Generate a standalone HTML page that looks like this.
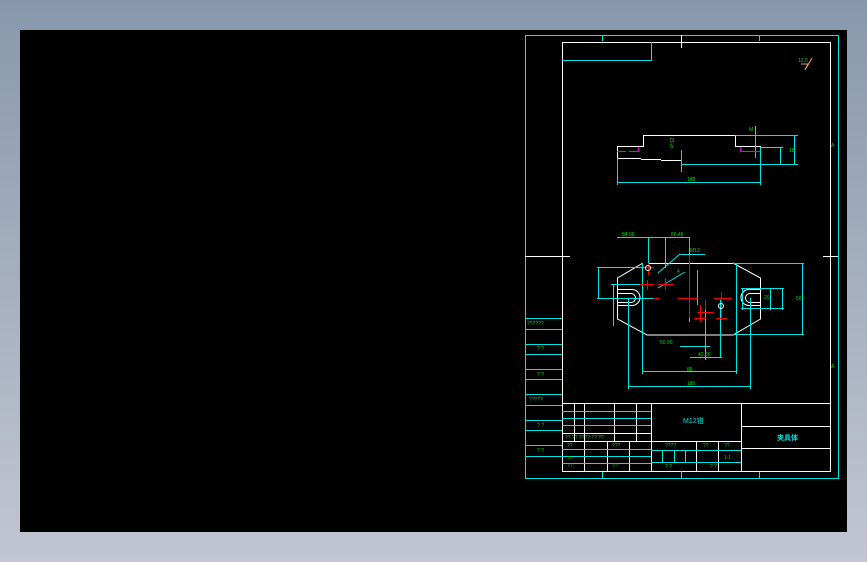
<!DOCTYPE html>
<html><head><meta charset="utf-8"><style>
html,body{margin:0;padding:0}
body{width:867px;height:562px;background:linear-gradient(#8898ac,#c2c6d2);position:relative;overflow:hidden;font-family:"Liberation Sans","Noto Sans CJK SC",sans-serif}
#c{position:absolute;left:20px;top:30px;width:827px;height:502px;background:#000}
svg{position:absolute;left:0;top:0}
text{font-family:"Liberation Sans","Noto Sans CJK SC",sans-serif}
</style></head><body>
<div id="c"></div>
<svg width="867" height="562" viewBox="0 0 867 562" shape-rendering="crispEdges" fill="none" stroke-width="1">
<!-- frames -->
<rect x="525.5" y="35.5" width="313" height="443" stroke="#00e5e5"/>
<path d="M562.5 471V42.5H830.5V471.5H562" stroke="#fff"/>
<path d="M562 60.5H651.5V42" stroke="#00e5e5"/>
<path d="M681.5 35V48" stroke="#fff"/>
<path d="M602.5 36V41M759.5 36V41M602.5 472V478M759.5 472V478M681.5 471V478" stroke="#00e5e5"/>
<path d="M525 256.5H570M823 256.5H838" stroke="#fff"/>
<!-- left column -->
<path d="M525 318.5H562M525 329.5H562M525 344.5H562M525 354.5H562M525 369.5H562M525 379.5H562M525 394.5H562M525 405.5H562M525 420.5H562M525 430.5H562M525 445.5H562M525 456.5H562" stroke="#00e5e5"/>
<!-- top view -->
<path d="M643.5 135V146.5H617.5V158.5H641M641 159.5H661M661 160.5H681M643 135.5H735.5V146.5H760.5V161" stroke="#fff"/>
<path d="M735 135.5H798M760 147.5H783M681 164.5H798M617.5 158V185M617 182.5H760M760.5 147V185M755.5 126V158M794.5 135V164M780.5 147V164M681.5 150V172" stroke="#00e5e5"/>
<path d="M617 151.5H626M629 151.5H638.5V147M740.5 147V151.5H760" stroke="#e000e0"/>
<!-- bottom view -->
<path d="M648 263.5H733M643 263L617.5 278V319L647 335H733L760.5 319V278L733 263" stroke="#fff" shape-rendering="auto"/>
<path d="M617 289.5H632A8 8 0 0 1 632 305.5H617M617 293.5H631A4.5 4.5 0 0 1 631 302.5H617M760 289.5H749A8 8 0 0 0 749 305.5H760M760 293.5H750A4.5 4.5 0 0 0 750 302.5H760" stroke="#fff" shape-rendering="auto"/>
<path d="M733 263.5H804M802.5 263V335M733 334.5H804M642.5 263V374M736.5 263V374M642 371.5H736M628.5 298V389M750.5 298V389M628 386.5H750M597 267.5H654M598.5 267V299M597 298.5H653M611 284.5H648M613.5 284V326M648.5 237V268M665.5 237V268M689.5 237V300M617 237.5H690M680 254.5H705M689.5 300V322M680 346.5H710M690 357.5H722M705.5 300V360M720.5 300V357M697.5 270V305M742.5 288V310M741 288.5H784M741 308.5H784M770.5 288V310M782.5 288V310" stroke="#00e5e5"/>
<path d="M658 273L680 254M658 288L685 272" stroke="#00e5e5" shape-rendering="auto"/>
<path d="M689.5 255V318M678 298.5H698M648.5 263V275M644 267.5H654M647.5 280V290M640 284.5H654M665.5 278V290M658 284.5H674M653 298.5H660M717 298.5H732M700.5 305V322M694 318.5H706M721.5 292V320M714 298.5H728M716 318.5H727M705.5 300V310M697 312.5H714" stroke="#f00"/>
<circle cx="648" cy="268" r="2.5" stroke="#fff" shape-rendering="auto"/>
<circle cx="721" cy="306" r="2.5" stroke="#fff" shape-rendering="auto"/>
<!-- title block -->
<path d="M562 403.5H830M651.5 403V471M741.5 403V471M741 426.5H830M741 448.5H830M574.5 403V441M584.5 403V471M614.5 403V441M636.5 403V441M562 433.5H651M562 441.5H741M607.5 441V471M629.5 441V471M696.5 441V471M718.5 441V471" stroke="#fff"/>
<path d="M562 411.5H651M562 418.5H651M562 425.5H651M562 449.5H651M562 456.5H651M562 463.5H651M651 450.5H741M651 462.5H741M662.5 450V462M674.5 450V462M685.5 450V462" stroke="#00e5e5"/>
<!-- roughness symbol -->
<path d="M801 64H808L805 70L812 58" stroke="#f0a070" shape-rendering="auto"/>
</svg>
<svg width="867" height="562" style="font-size:5px" fill="#00e000">
<text x="798" y="62">12.5</text>
<text x="749" y="131">M</text>
<text x="687" y="181">188</text>
<text x="673" y="143" transform="rotate(-90 676 145)">4*12</text>
<text x="789" y="152" >18</text>
<text x="831" y="147">A</text><text x="831" y="368">A</text>
<text x="622" y="236">84.98</text><text x="671" y="236">86.48</text>
<text x="690" y="252">M12</text>
<text x="677" y="273">4</text>
<text x="660" y="344">50.00</text>
<text x="698" y="356">40.00</text>
<text x="687" y="371">88</text><text x="687" y="385">180</text>
<text x="764" y="299">20</text><text x="796" y="300">56</text>
<text x="527" y="325">??????</text><text x="537" y="350">? ?</text>
<text x="537" y="376">? ?</text><text x="529" y="401">?????</text>
<text x="537" y="427">? ?</text><text x="537" y="452">? ?</text>
<text x="565" y="439">?? ?? ???? ?? ??</text>
<text x="567" y="447">??</text><text x="612" y="447">???</text>
<text x="567" y="460">??</text><text x="567" y="467">??</text>
<text x="612" y="467">??</text>
<text x="665" y="447">????</text><text x="703" y="447">??</text><text x="724" y="447">??</text>
<text x="724" y="459">1:1</text>
<text x="665" y="468">? ?</text><text x="710" y="468">? ?</text>
</svg>
<div style="position:absolute;left:683px;top:416px;font-size:7px;color:#00e5e5">M12钳</div>
<div style="position:absolute;left:777px;top:433px;font-size:7px;color:#00e5e5;font-weight:bold">夹具体</div>
</body></html>
